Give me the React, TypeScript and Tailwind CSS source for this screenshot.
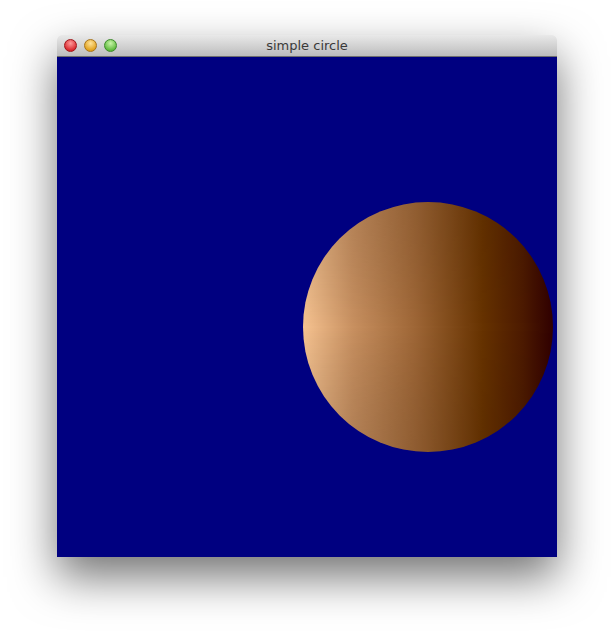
import React from 'react';

const Light = ({ from, to, ring }: { from: string; to: string; ring: string }) => (
  <span
    className="block w-[13px] h-[13px] rounded-full border"
    style={{ background: `radial-gradient(circle at 50% 30%, ${from}, ${to} 75%)`, borderColor: ring }}
  />
);

const Sphere: React.FC = () => (
  <svg width="250" height="250" viewBox="0 0 250 250">
    <defs>
      <linearGradient id="base" x1="0" y1="0" x2="1" y2="0">
        <stop offset="0" stopColor="#f6c391" />
        <stop offset="0.2" stopColor="#c89060" />
        <stop offset="0.45" stopColor="#9e6636" />
        <stop offset="0.72" stopColor="#663200" />
        <stop offset="0.88" stopColor="#4c1a00" />
        <stop offset="1" stopColor="#300000" />
      </linearGradient>
      <linearGradient id="shade" x1="0" y1="0" x2="0" y2="1">
        <stop offset="0" stopColor="#000" stopOpacity="0.18" />
        <stop offset="0.5" stopColor="#000" stopOpacity="0" />
        <stop offset="1" stopColor="#000" stopOpacity="0.2" />
      </linearGradient>
      <radialGradient id="fade" cx="0.1" cy="0.5" r="0.9">
        <stop offset="0" stopColor="#fff" stopOpacity="1" />
        <stop offset="1" stopColor="#fff" stopOpacity="0.2" />
      </radialGradient>
      <mask id="m">
        <rect width="250" height="250" fill="url(#fade)" />
      </mask>
    </defs>
    <circle cx="125" cy="125" r="125" fill="url(#base)" />
    <circle cx="125" cy="125" r="125" fill="url(#shade)" mask="url(#m)" />
  </svg>
);

export default function App() {
  return (
    <div className="w-[614px] h-[636px] bg-white pl-[57px] pt-[35px]">
      <div className="w-[500px] rounded-t-[5px] shadow-[0_20px_45px_rgba(0,0,0,0.55)]">
        <div className="relative h-[22px] rounded-t-[5px] bg-gradient-to-b from-[#e9e9e9] to-[#bdbdbd] border-b border-[#6e6e6e] flex items-center justify-center">
          <div className="absolute left-[7px] top-[4px] flex gap-[7px]">
            <Light from="#ff9a9a" to="#d8262b" ring="#a01418" />
            <Light from="#ffe39a" to="#e0a01a" ring="#a8741a" />
            <Light from="#c8f5a8" to="#5cb83a" ring="#3c8a2a" />
          </div>
          <span className="text-[13px] text-[#3a3a3a] font-['DejaVu_Sans',sans-serif] leading-none">simple circle</span>
        </div>
        <div className="h-[500px] bg-[#000080] pl-[246px] pt-[145px]">
          <Sphere />
        </div>
      </div>
    </div>
  );
}
